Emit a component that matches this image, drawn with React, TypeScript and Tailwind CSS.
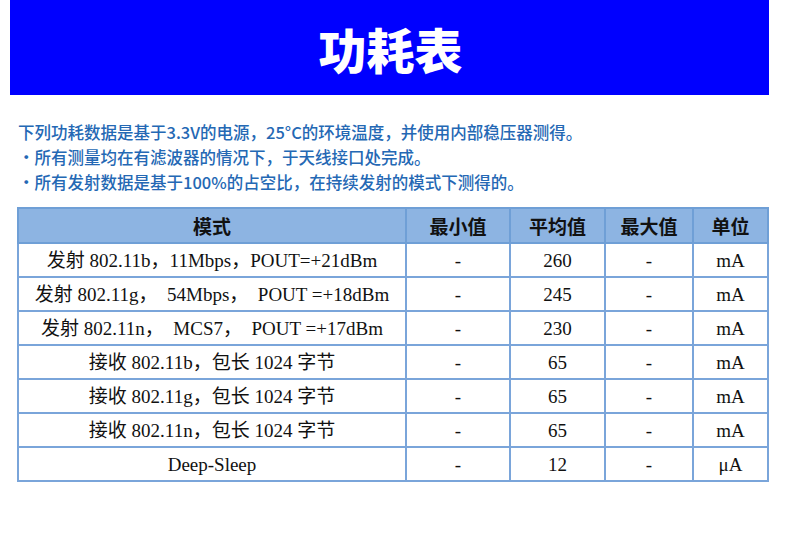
import React from "react";

const rows: [string, string, string, string, string][] = [
  ["发射 802.11b，11Mbps，POUT=+21dBm", "-", "260", "-", "mA"],
  ["发射 802.11g，  54Mbps，  POUT =+18dBm", "-", "245", "-", "mA"],
  ["发射 802.11n，  MCS7，  POUT =+17dBm", "-", "230", "-", "mA"],
  ["接收 802.11b，包长 1024 字节", "-", "65", "-", "mA"],
  ["接收 802.11g，包长 1024 字节", "-", "65", "-", "mA"],
  ["接收 802.11n，包长 1024 字节", "-", "65", "-", "mA"],
  ["Deep-Sleep", "-", "12", "-", "μA"],
];

const headers = ["模式", "最小值", "平均值", "最大值", "单位"];
const widths = ["w-[388px]", "w-[104px]", "w-[95px]", "w-[88px]", "w-[75px]"];

export default function App() {
  return (
    <div className="w-[787px] h-[540px] bg-white overflow-hidden">
      <div className="ml-[10px] w-[759px] h-[95px] bg-[#0000ff] flex items-center justify-center">
        <span
          className="text-white text-[48px] font-black leading-none pl-[2px]"
          style={{ fontFamily: '"Noto Sans CJK SC", sans-serif' }}
        >
          功耗表
        </span>
      </div>
      <div
        className="ml-[18px] mt-[25px] text-[16.5px] leading-[25px] font-medium text-[#2468b4]"
        style={{ fontFamily: '"Noto Sans CJK SC", sans-serif' }}
      >
        <div>下列功耗数据是基于3.3V的电源，25°C的环境温度，并使用内部稳压器测得。</div>
        <div>・所有测量均在有滤波器的情况下，于天线接口处完成。</div>
        <div>・所有发射数据是基于100%的占空比，在持续发射的模式下测得的。</div>
      </div>
      <table className="ml-[17px] mt-[12px] border-collapse table-fixed w-[750px]">
        <thead>
          <tr className="h-[35px] bg-[#8db4e2]">
            {headers.map((h, i) => (
              <th
                key={i}
                className={`${widths[i]} border-2 border-[#6f9fd6] p-0 text-center text-[19px] font-bold text-[#111] leading-none`}
                style={{ fontFamily: '"Noto Sans CJK SC", sans-serif' }}
              >
                {h}
              </th>
            ))}
          </tr>
        </thead>
        <tbody>
          {rows.map((r, ri) => (
            <tr key={ri} className="h-[34px]">
              {r.map((c, ci) => (
                <td
                  key={ci}
                  className="border-2 border-[#7aa5da] p-0 text-center text-[19px] text-[#111] leading-none whitespace-pre"
                  style={{ fontFamily: '"Liberation Serif", "Noto Sans CJK SC", serif' }}
                >
                  {c}
                </td>
              ))}
            </tr>
          ))}
        </tbody>
      </table>
    </div>
  );
}
